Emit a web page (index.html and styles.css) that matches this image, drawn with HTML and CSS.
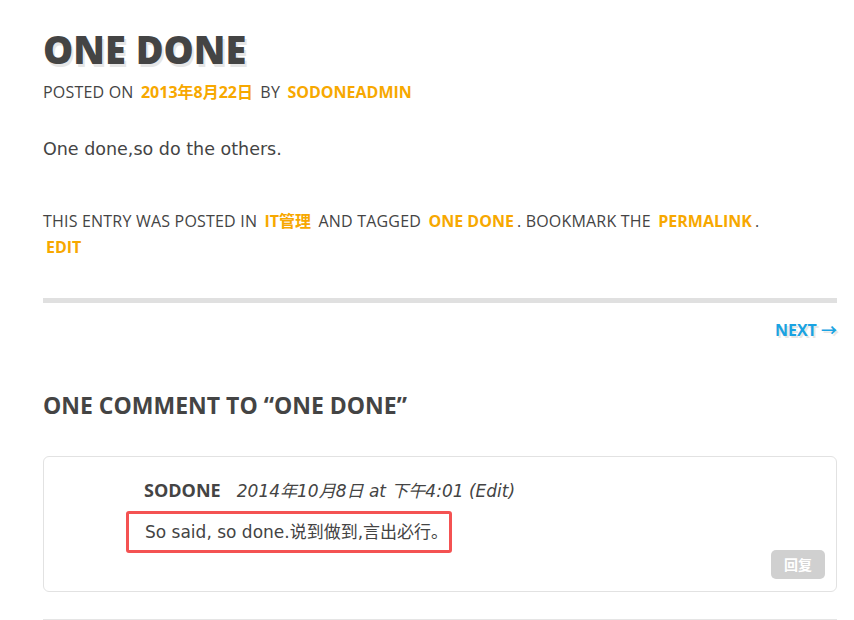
FILE: index.html
```
<!DOCTYPE html>
<html>
<head lang="zh-CN">
    <meta charset="UTF-8">
    <title>ONE DONE</title>
    <link rel="stylesheet" href="styles.css">
</head>
<body>
<div id="content">
    <article class="entry">
        <h1 class="entry-title">ONE DONE</h1>
        <div class="entry-meta">
            POSTED ON <a href="#">2013年8月22日</a> BY <a href="#">SODONEADMIN</a>
        </div>
        <div class="entry-content">
            <p>One done,so do the others.</p>
        </div>
        <footer class="entry-footer">
            THIS ENTRY WAS POSTED IN <a href="#">IT管理</a> AND TAGGED <a href="#">ONE DONE</a>. BOOKMARK THE <a href="#">PERMALINK</a>.
            <br><a href="#">EDIT</a>
        </footer>
    </article>
    <nav class="post-nav">
        <a href="#">NEXT <span class="arrow">&rarr;</span></a>
    </nav>
    <section class="comments">
        <h2 class="comments-title">ONE COMMENT TO “ONE DONE”</h2>
        <div class="comment">
            <div class="comment-meta">
                <b class="author">SODONE</b>
                <i class="date">2014年10月8日 at 下午4:01 (Edit)</i>
            </div>
            <p class="comment-text">So said, so done.说到做到,言出必行。</p>
            <div class="reply"><a href="#">回复</a></div>
        </div>
    </section>
</div>
</body>
</html>
```

FILE: styles.css
```
*{
    margin: 0;
    padding: 0;
}
body{
    color: #444;
    font-family: "Open Sans", "Noto Sans CJK SC", sans-serif;
    background: #fff;
}
a{
    text-decoration: none;
}
#content{
    width: 794px;
    margin-left: 43px;
}
.entry-title{
    font-size: 38px;
    font-weight: 800;
    line-height: 46px;
    padding-top: 26px;
    text-shadow: 2px 3px 0 #e6e6e6;
}
.entry-meta,.entry-footer{
    font-size: 16px;
    line-height: 26px;
    letter-spacing: 0.2px;
}
.entry-meta{
    margin-top: 7px;
}
.entry-meta a,.entry-footer a{
    color: #f7a800;
    font-weight: 700;
    letter-spacing: 0;
    padding: 0 3px;
}
.entry-content{
    font-family: "DejaVu Sans", "Noto Sans CJK SC", sans-serif;
    font-size: 17.5px;
    line-height: 28px;
    margin-top: 30px;
}
.entry-footer{
    margin-top: 45px;
}
.post-nav{
    border-top: 5px solid #e0e0e0;
    margin-top: 38px;
    padding-top: 14px;
    text-align: right;
    font-size: 16px;
    font-weight: 700;
}
.post-nav a{
    color: #1aa3e2;
    text-shadow: 2px 2px 0 #e6e6e6;
}
.comments-title{
    font-size: 23px;
    font-weight: 700;
    margin-top: 49px;
    line-height: 30px;
}
.comment{
    margin-top: 36px;
    border: 1px solid #e2e2e2;
    border-radius: 6px;
    padding: 20px 11px 12px 100px;
}
.comment-meta{
    line-height: 26px;
}
.author{
    font-size: 18px;
    font-weight: 700;
    margin-right: 12px;
}
.date{
    font-family: "DejaVu Sans", "Noto Sans CJK SC", sans-serif;
    font-size: 17px;
}
.comment-text{
    display: inline-block;
    font-family: "DejaVu Sans", "Noto Sans CJK SC", sans-serif;
    font-size: 17px;
    line-height: 30px;
    margin: 7px 0 0 -18px;
    padding: 3px 1px 3px 16px;
    border: 3px solid #f45252;
    border-radius: 3px;
}
.reply{
    text-align: right;
    margin-top: -3px;
}
.reply a{
    display: inline-block;
    background: #d0d0d0;
    color: #fff;
    font-weight: 700;
    font-size: 14px;
    line-height: 29px;
    padding: 0 13px;
    border-radius: 5px;
}
.comments::after{
    content: "";
    display: block;
    border-top: 1px solid #e5e5e5;
    margin-top: 27px;
}
```
